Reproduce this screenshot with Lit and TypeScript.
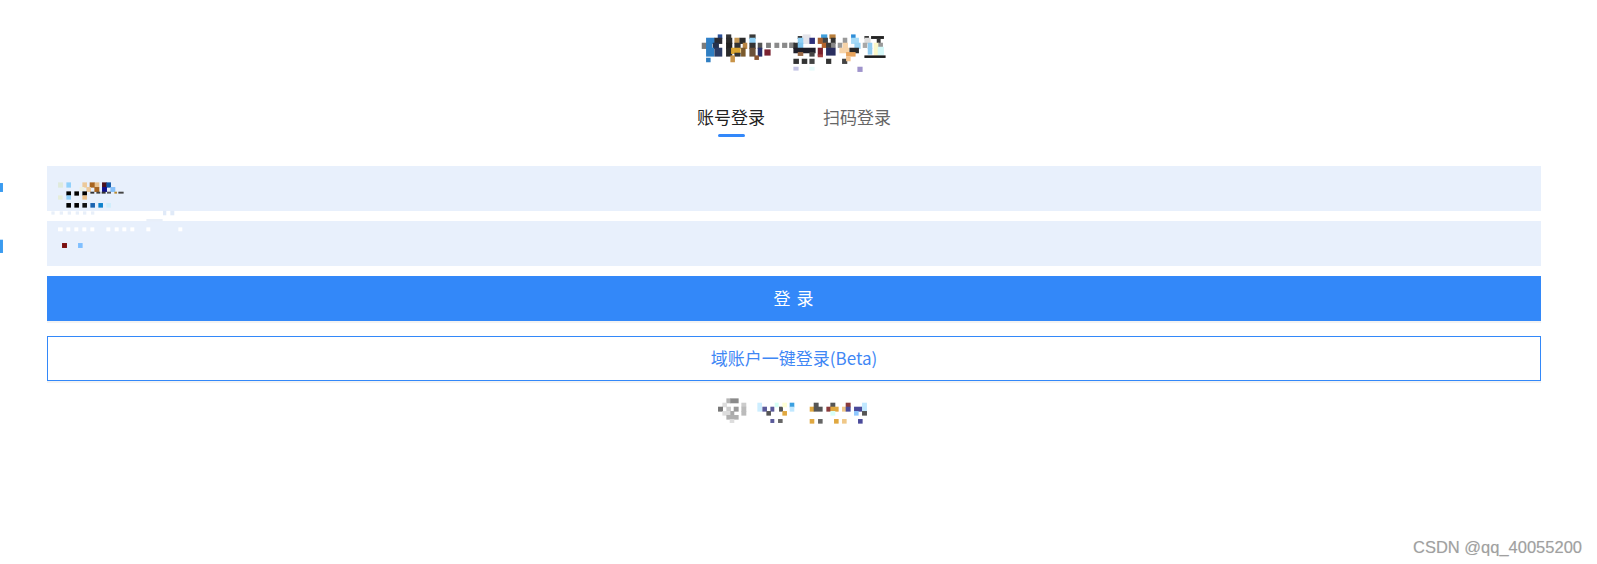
import { LitElement, html, css, svg } from "lit";
import { customElement } from "lit/decorators.js";

type R = [number, number, number, number, string];
// rects given in zoom-crop coordinates: [zx1, zy1, zx2, zy2, colour]; page = offset + z/3
const groups: { ox: number; oy: number; grow: number; r: R[] }[] = [
  { ox: 695, oy: 30, grow: 0.6, r: [
    [70,15,80,25,"#2a4f96"],[95,15,107,25,"#333"],[165,15,180,25,"#3a3a3a"],
    [35,25,58,40,"#2f80c8"],[60,25,80,40,"#2b2b33"],[95,25,110,40,"#2c2c2c"],[120,25,132,40,"#c79a55"],[135,25,150,40,"#2a2a2a"],[165,25,180,40,"#8fd0f5"],
    [22,40,35,55,"#7c7c7c"],[35,40,50,55,"#2f7fc4"],[55,40,70,55,"#24324f"],[95,40,110,55,"#222"],[120,40,135,55,"#333"],[145,40,155,55,"#b98645"],[165,40,180,55,"#333"],[190,40,200,55,"#555"],[215,40,226,52,"#7e7e7e"],[240,40,251,52,"#8a8a8a"],[263,40,275,52,"#8a8a8a"],[285,40,298,52,"#7a7a7a"],
    [35,55,56,78,"#2f7ec2"],[60,55,80,78,"#2c3b63"],[95,55,110,78,"#2a2a2a"],[110,55,135,70,"#dba52f"],[140,55,150,78,"#7b5a2c"],[165,55,180,78,"#6b5138"],[190,55,200,78,"#27306b"],[210,60,225,75,"#7a2230"],
    [120,70,135,78,"#333"],[108,78,118,95,"#c99448"],[180,78,190,88,"#8a5530"],[35,85,45,95,"#2f7ec2"],
  ]},
  { ox: 790, oy: 30, grow: 0.6, r: [
    [25,20,35,25,"#333"],[40,15,60,40,"#e4e4ea"],[60,25,73,40,"#2d2f7a"],[25,25,38,40,"#8fd0f5"],[95,15,110,25,"#3f9fdc"],[120,15,135,25,"#b97f3c"],[185,15,195,25,"#2f8ed8"],[225,20,235,25,"#333"],[245,20,280,25,"#222"],
    [85,25,97,40,"#a8602e"],[100,25,112,40,"#444"],[124,25,135,40,"#333"],[160,25,170,40,"#999"],[185,25,205,40,"#a8dcf8"],[225,25,240,40,"#ddd"],[262,25,270,55,"#333"],
    [0,40,12,52,"#888"],[12,40,25,55,"#333"],[25,40,38,55,"#7fc4ee"],[97,40,110,52,"#b5652c"],[110,40,125,52,"#3a3a3a"],[125,40,135,52,"#888"],[145,40,155,52,"#999"],[160,40,172,55,"#f6d3a8"],[195,40,210,55,"#9bd5f5"],[220,40,230,52,"#a8a8a8"],[235,40,245,55,"#8fcbf0"],[253,40,265,75,"#fbf7c8"],[267,40,277,52,"#999"],
    [12,55,75,68,"#1f1f2a"],[85,55,97,75,"#7a1f2a"],[110,55,135,75,"#2a2f60"],[150,55,175,68,"#f6d3a8"],[180,55,205,68,"#2a2a2a"],[235,55,245,72,"#8fcbf0"],[265,52,280,75,"#d4f8f8"],
    [25,68,38,76,"#9a6a48"],[60,68,72,78,"#444"],[85,75,97,80,"#a04040"],[170,68,195,78,"#e9a55d"],[225,78,285,82,"#1c1c1c"],
    [12,88,25,100,"#333"],[37,88,50,100,"#333"],[60,88,72,100,"#444"],[110,88,122,100,"#333"],[158,88,170,100,"#444"],[170,82,180,92,"#f4c48e"],
    [12,112,24,120,"#c4c4e4"],[60,112,72,120,"#e8fafa"],[204,112,216,124,"#9f94cc"],
  ]},
  // username field
  { ox: 0, oy: 160, grow: 0.3, r: [
    [175,68,188,82,"#dfeadb"],[200,68,212,82,"#8fd0fb"],[248,68,260,82,"#ecc99a"],[270,68,284,82,"#a8641f"],[285,68,297,82,"#e8c18e"],[307,68,320,82,"#4a0f1c"],[320,68,332,82,"#1158a8"],
    [260,82,272,95,"#ecc99a"],[284,82,297,95,"#a8641f"],[307,82,320,95,"#10108a"],[332,82,345,95,"#86c0fa"],[240,82,252,92,"#eef0df"],
    [200,95,212,106,"#000"],[224,95,236,106,"#000"],[248,95,260,106,"#000"],
    [272,96,282,100,"#333"],[290,96,300,100,"#444"],[306,96,316,100,"#333"],[322,96,332,100,"#555"],[344,96,350,100,"#b98a30"],[356,96,370,100,"#444"],
    [175,107,187,118,"#e6edd9"],[200,107,212,118,"#8fd0fb"],[248,107,260,118,"#ecc08a"],
    [200,130,212,142,"#000"],[224,130,236,142,"#000"],[248,130,260,142,"#111"],[272,130,284,142,"#1b63b0"],[296,130,308,142,"#0f82cc"],[320,130,332,142,"#cfeefc"],
    [155,155,163,163,"#e8eff9"],[180,155,188,163,"#e8eff9"],[204,155,212,163,"#e8eff9"],[228,155,236,163,"#e8eff9"],[250,155,258,163,"#e8eff9"],[274,155,282,163,"#e8eff9"],[490,153,498,165,"#e0eaf8"],[512,153,522,165,"#e0eaf8"],[440,178,487,183,"#e8eff9"],
    [0,70,8,95,"#3a9bf0"],
  ]},
  // password field
  { ox: 0, oy: 160, grow: 0.3, r: [
    [175,203,187,213,"#fff"],[200,203,210,213,"#fff"],[224,203,234,213,"#fff"],[248,203,258,213,"#fff"],[272,203,282,213,"#fff"],[320,203,330,213,"#fff"],[345,203,355,213,"#fff"],[368,203,378,213,"#fff"],[392,203,402,213,"#fff"],[440,203,450,213,"#fff"],[536,203,546,213,"#fff"],
    [187,250,200,263,"#7a0f0f"],[235,250,247,263,"#7fbfff"],
    [0,240,8,278,"#3a9bf0"],
  ]},
  // bottom left
  { ox: 710, oy: 392, grow: 0.3, r: [
    [50,20,62,33,"#b5b5b5"],[62,20,85,33,"#8a8a8a"],[38,33,50,45,"#ddd"],[95,33,108,45,"#ccc"],
    [25,45,38,58,"#777"],[50,45,62,58,"#ccc"],[72,45,85,58,"#999"],[95,45,108,58,"#bbb"],
    [38,58,62,70,"#ddd"],[62,58,72,70,"#aaa"],[95,58,108,70,"#bbb"],[50,70,85,82,"#b0b0b0"],[60,82,72,92,"#ddd"],
    [143,33,155,58,"#cdeeff"],[158,45,170,58,"#5a5a9a"],[182,45,192,58,"#5a5a9a"],[195,33,205,45,"#d5fff5"],[208,45,218,58,"#555"],[218,33,230,45,"#ffffd5"],[240,33,252,45,"#3aa0e0"],[240,45,252,58,"#c0e8ff"],
    [170,58,182,70,"#555"],[218,58,230,70,"#e0a840"],[182,82,192,92,"#5a5a9a"],[205,82,217,92,"#666"],
  ]},
  // bottom right
  { ox: 790, oy: 392, grow: 0.3, r: [
    [72,33,85,45,"#555"],[60,45,72,58,"#e0a840"],[72,45,97,58,"#555"],[60,82,72,94,"#e0a840"],[85,82,97,94,"#666"],
    [122,33,135,45,"#555"],[110,45,122,58,"#8a3a3a"],[122,45,145,58,"#e0a840"],[122,58,135,70,"#d8fff8"],[133,82,145,94,"#e0a840"],[157,82,169,94,"#f0c888"],
    [168,33,181,45,"#8a3a3a"],[157,45,168,58,"#f0c888"],[168,45,181,58,"#4a4a9a"],
    [193,45,217,58,"#4a4a9a"],[217,33,230,58,"#c0e8ff"],[193,58,205,70,"#8fc8ff"],[217,58,230,70,"#555"],[205,82,217,94,"#4a4a9a"],
  ]},
];

@customElement("app-root")
export class AppRoot extends LitElement {
  static styles = css`
    :host {
      display: block;
      position: relative;
      height: 564px;
      background: #fff;
      overflow: hidden;
      font-family: "Noto Sans CJK SC", "Liberation Sans", sans-serif;
    }
    .form {
      width: 1494px;
      margin-left: 47px;
      padding-top: 102px;
      display: flex;
      flex-direction: column;
    }
    .tabs {
      display: flex;
      justify-content: center;
      gap: 58px;
      height: 64px;
    }
    .tab {
      font-size: 17px;
      line-height: 30px;
      height: 35px;
      color: #666;
      display: flex;
      flex-direction: column;
      align-items: center;
    }
    .tab.on { color: #222; }
    .tab.on::after {
      content: "";
      width: 27px;
      height: 3px;
      margin-top: auto;
      border-radius: 2px;
      background: #3388fa;
    }
    .field {
      height: 45px;
      background: #e8f0fc;
      margin-bottom: 10px;
    }
    .btn {
      height: 45px;
      box-sizing: border-box;
      display: flex;
      align-items: center;
      justify-content: center;
      padding-bottom: 3px;
      font-size: 17px;
      box-shadow: 0 2px 0 #f3f3f3;
    }
    .primary {
      background: #3388f9;
      color: #fff;
      letter-spacing: 1px;
      margin-bottom: 15px;
    }
    .outline {
      border: 1px solid #3388f9;
      color: #3f87f5;
      background: #fff;
    }
    .mark {
      position: absolute;
      right: 15px;
      bottom: 7px;
      font: 16.5px/20px "Liberation Sans", Arial, sans-serif;
      color: #a0a0a0;
      text-shadow: 0 0 1px #ddd;
    }
    .mosaic {
      position: absolute;
      inset: 0;
      pointer-events: none;
      filter: blur(0.35px);
    }
  `;

  render() {
    return html`
      <div class="form">
        <div class="tabs">
          <div class="tab on">账号登录</div>
          <div class="tab">扫码登录</div>
        </div>
        <div class="field"></div>
        <div class="field"></div>
        <div class="btn primary">登 录</div>
        <div class="btn outline">域账户一键登录(Beta)</div>
      </div>
      <svg class="mosaic" width="1597" height="564" viewBox="0 0 1597 564">
        ${groups.flatMap((g) =>
          g.r.map(
            ([a, b, c, d, col]) => svg`<rect x=${g.ox + a / 3 - g.grow} y=${g.oy + b / 3 - g.grow} width=${(c - a) / 3 + 2 * g.grow} height=${(d - b) / 3 + 2 * g.grow} fill=${col}></rect>`
          )
        )}
      </svg>
      <div class="mark">CSDN @qq_40055200</div>
    `;
  }
}
